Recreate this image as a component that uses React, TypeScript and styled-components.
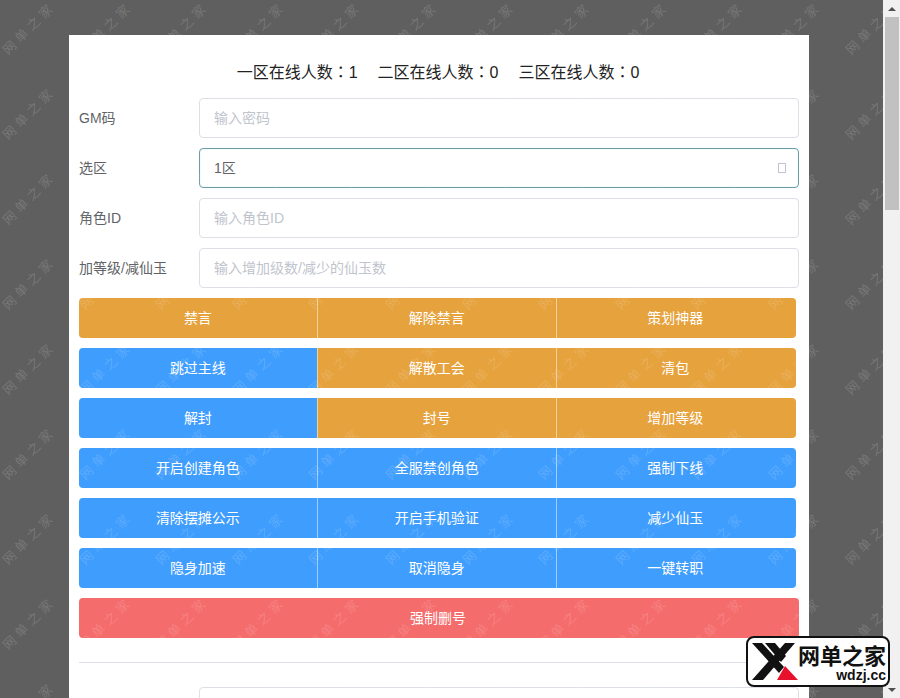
import React from "react";
import styled, { createGlobalStyle } from "styled-components";

const Global = createGlobalStyle`
  html, body { margin: 0; padding: 0; height: 698px; overflow: hidden; }
  body { font-family: "Liberation Sans", "Noto Sans CJK SC", sans-serif; }
  * { box-sizing: border-box; }
`;

const Frame = styled.div`
  position: relative;
  display: flex;
  width: 900px;
  height: 698px;
  overflow: hidden;
`;

const Viewport = styled.div`
  position: relative;
  flex: 0 0 883px;
  height: 698px;
  overflow: hidden;
  background: #5f5f5f;
  padding: 35px 0 0 69px;
`;

const Panel = styled.main`
  width: 740px;
  height: 800px;
  background: #fff;
  padding: 25px 10px 0;
`;

const Title = styled.h1`
  display: flex;
  justify-content: center;
  gap: 20px;
  margin: 0 0 14px;
  padding: 1px 2px 0 0;
  height: 24px;
  font: 400 16px/24px "Liberation Sans", "Noto Sans CJK TC", sans-serif;
  color: #222;
`;

const FormRow = styled.div`
  display: flex;
  align-items: center;
  height: 40px;
  margin-bottom: 10px;
`;

const Label = styled.label`
  flex: 0 0 120px;
  padding-bottom: 2px;
  font-size: 14px;
  color: #606266;
`;

const TextInput = styled.input`
  flex: 1;
  min-width: 0;
  height: 40px;
  padding: 0 14px;
  border: 1px solid #dcdfe6;
  border-radius: 4px;
  background: #fff;
  font: 14px "Liberation Sans", "Noto Sans CJK SC", sans-serif;
  color: #606266;
  outline: none;
  &::placeholder { color: #c0c4cc; opacity: 1; }
`;

const SelectBox = styled.div`
  flex: 1;
  display: flex;
  align-items: center;
  justify-content: space-between;
  height: 40px;
  padding: 0 12px 0 14px;
  border: 1px solid #6f9aa8;
  border-radius: 4px;
  box-shadow: inset 0 0 2px rgba(120, 220, 230, 0.35);
  font-size: 14px;
  color: #606266;
`;

const SelectValue = styled.span`
  padding-bottom: 2px;
`;

const MissingGlyph = styled.span`
  width: 8px;
  height: 10px;
  border: 1px solid #c0c4cc;
`;

const Group = styled.div`
  display: flex;
  height: 40px;
  margin-bottom: 10px;
`;

const tones = { warning: "#e6a23c", primary: "#3f9dfd", danger: "#f56c6c" };

const Action = styled.button<{ $tone: keyof typeof tones }>`
  flex: 0 0 33.3%;
  margin-right: -1.3px;
  height: 40px;
  padding: 0 2px 2px 0;
  border: 0;
  border-left: 1px solid rgba(255, 255, 255, 0.5);
  background: ${(p) => tones[p.$tone]};
  color: #fff;
  font: 14px "Liberation Sans", "Noto Sans CJK SC", sans-serif;
  &:first-child { border-left: 0; border-radius: 4px 0 0 4px; }
  &:last-child { border-radius: 0 4px 4px 0; margin-right: 0; }
`;

const WideAction = styled.button`
  width: 100%;
  height: 40px;
  padding: 0 2px 2px 0;
  border: 0;
  border-radius: 4px;
  background: ${tones.danger};
  color: #fff;
  font: 14px "Liberation Sans", "Noto Sans CJK SC", sans-serif;
`;

const Rule = styled.hr`
  height: 1px;
  margin: 24px 0;
  border: 0;
  background: #dcdfe6;
`;

const Watermarks = styled.div`
  position: absolute;
  left: -10px;
  top: -15px;
  display: grid;
  grid-template-columns: repeat(13, 76.6px);
  grid-auto-rows: 85px;
  pointer-events: none;
`;

const Mark = styled.span`
  display: flex;
  align-items: center;
  justify-content: center;
  white-space: nowrap;
  font: 13px "Noto Sans CJK SC", sans-serif;
  letter-spacing: 4px;
  color: rgba(255, 255, 255, 0.16);
  transform: rotate(-45deg);
`;

const Scrollbar = styled.div`
  flex: 0 0 17px;
  display: flex;
  flex-direction: column;
  align-items: center;
  background: #f1f1f1;
`;

const ArrowCell = styled.div`
  flex: 0 0 17px;
  display: flex;
  align-items: center;
  justify-content: center;
`;

const Arrow = styled.span<{ $down?: boolean }>`
  width: 0;
  height: 0;
  border-left: 4px solid transparent;
  border-right: 4px solid transparent;
  ${(p) => (p.$down ? "border-top: 4px solid #505050;" : "border-bottom: 4px solid #505050;")}
`;

const Thumb = styled.div`
  flex: 0 0 193px;
  width: 14px;
  background: #c1c1c1;
`;

const Track = styled.div`
  flex: 1;
`;

const Logo = styled.div`
  position: absolute;
  left: 746px;
  top: 636px;
  display: flex;
  width: 144px;
  height: 51px;
  padding: 0 3px 0 2px;
  border: 2px solid #111;
  border-radius: 8px;
  background: #fff;
`;

const LogoMark = styled.svg`
  flex: 0 0 48px;
  width: 48px;
  height: 47px;
`;

const LogoText = styled.div`
  flex: 1;
  display: flex;
  flex-direction: column;
  align-items: flex-end;
  color: #111;
`;

const LogoName = styled.div`
  margin-top: 3px;
  font: 700 22px/26px "Noto Sans CJK SC", sans-serif;
  white-space: nowrap;
`;

const LogoUrl = styled.div`
  font: 700 14px/16px "Liberation Sans", sans-serif;
`;

const rows: [string, keyof typeof tones][][] = [
  [["禁言", "warning"], ["解除禁言", "warning"], ["策划神器", "warning"]],
  [["跳过主线", "primary"], ["解散工会", "warning"], ["清包", "warning"]],
  [["解封", "primary"], ["封号", "warning"], ["增加等级", "warning"]],
  [["开启创建角色", "primary"], ["全服禁创角色", "primary"], ["强制下线", "primary"]],
  [["清除摆摊公示", "primary"], ["开启手机验证", "primary"], ["减少仙玉", "primary"]],
  [["隐身加速", "primary"], ["取消隐身", "primary"], ["一键转职", "primary"]],
];

export default function App() {
  return (
    <Frame>
      <Global />
      <Viewport>
        <Panel>
          <Title>
            <span>一区在线人数：1</span>
            <span>二区在线人数：0</span>
            <span>三区在线人数：0</span>
          </Title>
          <FormRow>
            <Label>GM码</Label>
            <TextInput placeholder="输入密码" />
          </FormRow>
          <FormRow>
            <Label>选区</Label>
            <SelectBox>
              <SelectValue>1区</SelectValue>
              <MissingGlyph />
            </SelectBox>
          </FormRow>
          <FormRow>
            <Label>角色ID</Label>
            <TextInput placeholder="输入角色ID" />
          </FormRow>
          <FormRow>
            <Label>加等级/减仙玉</Label>
            <TextInput placeholder="输入增加级数/减少的仙玉数" />
          </FormRow>
          {rows.map((row, i) => (
            <Group key={i}>
              {row.map(([text, tone]) => (
                <Action key={text} $tone={tone}>
                  {text}
                </Action>
              ))}
            </Group>
          ))}
          <WideAction>强制删号</WideAction>
          <Rule />
          <FormRow>
            <Label />
            <TextInput />
          </FormRow>
        </Panel>
        <Watermarks>
          {Array.from({ length: 13 * 9 }, (_, i) => (
            <Mark key={i}>网单之家</Mark>
          ))}
        </Watermarks>
      </Viewport>
      <Scrollbar>
        <ArrowCell>
          <Arrow />
        </ArrowCell>
        <Thumb />
        <Track />
        <ArrowCell>
          <Arrow $down />
        </ArrowCell>
      </Scrollbar>
      <Logo>
        <LogoMark viewBox="0 0 48 47">
          <path d="M2 5h10l22 24-5 6z" fill="#111" />
          <path d="M15 5h10l11 13-5 6z" fill="#111" />
          <path d="M45 5H35L2 42h11z" fill="#111" />
          <path d="M27 42h21L35 28z" fill="#e8112d" />
        </LogoMark>
        <LogoText>
          <LogoName>网单之家</LogoName>
          <LogoUrl>wdzj.cc</LogoUrl>
        </LogoText>
      </Logo>
    </Frame>
  );
}
